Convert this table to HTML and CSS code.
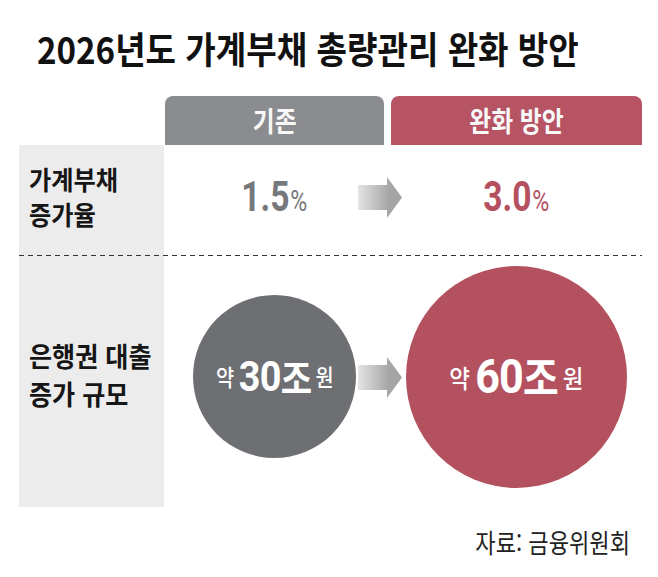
FILE: index.html
```html
<!DOCTYPE html>
<html lang="ko">
<head>
<meta charset="utf-8">
<title>2026년도 가계부채 총량관리 완화 방안</title>
<link rel="stylesheet" href="styles.css">
</head>
<body>
<div class="page">
  <h1 class="title"><span class="squeeze">2026년도 가계부채 총량관리 완화 방안</span></h1>
  <div class="table">
    <div class="side"></div>
    <div class="head head-gray"><span class="squeeze">기존</span></div>
    <div class="head head-red"><span class="squeeze">완화 방안</span></div>

    <div class="label label-1"><span class="squeeze">가계부채<br>증가율</span></div>
    <div class="val val-gray"><span class="squeeze"><span class="digits">1.5</span><span class="pct">%</span></span></div>
    <svg class="arrow arrow-1" viewBox="0 0 44 41" aria-hidden="true">
      <defs>
        <linearGradient id="ag1" x1="0" y1="0" x2="1" y2="0">
          <stop offset="0" stop-color="#e4e4e4"/>
          <stop offset="0.7" stop-color="#a6a6a6"/>
          <stop offset="1" stop-color="#a3a3a3"/>
        </linearGradient>
      </defs>
      <path d="M0 8 H29 V0 L44 20.5 L29 41 V33 H0 Z" fill="url(#ag1)"/>
    </svg>
    <div class="val val-red"><span class="squeeze"><span class="digits">3.0</span><span class="pct">%</span></span></div>

    <div class="divider"></div>

    <div class="label label-2"><span class="squeeze">은행권 대출<br>증가 규모</span></div>
    <div class="circle circle-gray">
      <span class="amount"><span class="yak">약</span><span class="big">30</span><span class="jo">조</span><span class="won">원</span></span>
    </div>
    <svg class="arrow arrow-2" viewBox="0 0 44 41" aria-hidden="true">
      <defs>
        <linearGradient id="ag2" x1="0" y1="0" x2="1" y2="0">
          <stop offset="0" stop-color="#e4e4e4"/>
          <stop offset="0.7" stop-color="#a6a6a6"/>
          <stop offset="1" stop-color="#a3a3a3"/>
        </linearGradient>
      </defs>
      <path d="M0 8 H29 V0 L44 20.5 L29 41 V33 H0 Z" fill="url(#ag2)"/>
    </svg>
    <div class="circle circle-red">
      <span class="amount"><span class="yak">약</span><span class="big">60</span><span class="jo">조</span><span class="won">원</span></span>
    </div>
  </div>
  <div class="source"><span class="squeeze">자료: 금융위원회</span></div>
</div>
</body>
</html>
```

FILE: styles.css
```css
* {
  box-sizing: border-box;
}

html,
body {
  margin: 0;
  padding: 0;
  background: #ffffff;
}

body {
  width: 658px;
  height: 577px;
  overflow: hidden;
  font-family: "Noto Sans CJK KR", "Noto Sans", sans-serif;
  color: #151515;
}

.squeeze {
  display: inline-block;
  white-space: nowrap;
}

/* Title */
.title {
  margin: 30px 0 0 37px;
  font-size: 37px;
  line-height: 36px;
  font-weight: 700;
  white-space: nowrap;
  color: #111111;
}

.title .squeeze {
  transform: scaleX(0.895);
  transform-origin: left center;
}

/* Comparison table */
.table {
  margin: 30px 0 0 19px;
  width: 623px;
  display: grid;
  grid-template-columns: 146px 219px 7px 251px;
  grid-template-rows: 49px 110px 1px 251px;
}

.side {
  grid-column: 1;
  grid-row: 2 / 5;
  width: 145px;
  background: #ececec;
}

.head {
  grid-row: 1;
  display: flex;
  align-items: center;
  justify-content: center;
  border-radius: 8px 8px 0 0;
  color: #f8f8f8;
  font-size: 28px;
  line-height: 1;
  font-weight: 600;
  padding-bottom: 2px;
}

.head .squeeze {
  transform: scaleX(0.85);
}

.head-gray {
  grid-column: 2;
  background: #8b8c8f;
}

.head-red {
  grid-column: 4;
  background: #b65464;
}

/* Row labels */
.label {
  grid-column: 1;
  align-self: center;
  padding-left: 10px;
  font-weight: 700;
  color: #161616;
}

.label .squeeze {
  transform: scaleX(0.93);
  transform-origin: left center;
}

.label-1 {
  grid-row: 2;
  font-size: 26px;
  line-height: 35px;
  margin-bottom: 8px;
}

.label-2 {
  grid-row: 4;
  font-size: 27px;
  line-height: 38px;
  margin-bottom: 14px;
}

/* Percent values */
.val {
  grid-row: 2;
  display: flex;
  align-items: center;
  justify-content: center;
  margin-bottom: 6px;
  font-family: Roboto, "Noto Sans", sans-serif;
  font-weight: 700;
}

.val .squeeze {
  transform: scaleX(0.8);
  font-size: 42px;
  line-height: 1;
}

.val .pct {
  font-weight: 400;
  font-size: 29px;
  margin-left: 1px;
}

.val-gray {
  grid-column: 2;
  color: #77787b;
}

.val-red {
  grid-column: 4;
  color: #b4505f;
}

/* Arrows */
.arrow {
  grid-column: 3;
  justify-self: start;
  align-self: center;
  display: block;
  width: 44px;
  height: 41px;
  margin-left: -26px;
}

.arrow-1 {
  grid-row: 2;
  margin-bottom: 6px;
}

.arrow-2 {
  grid-row: 4;
  margin-bottom: 8px;
}

.divider {
  grid-column: 1 / -1;
  grid-row: 3;
  height: 1px;
  background-image: repeating-linear-gradient(90deg, #333333 0 5px, transparent 5px 9px);
}

/* Circles */
.circle {
  grid-row: 4;
  align-self: center;
  justify-self: center;
  display: flex;
  align-items: center;
  justify-content: center;
  border-radius: 50%;
  color: #ffffff;
  margin-bottom: 10px;
}

.circle-gray {
  grid-column: 2;
  width: 163px;
  height: 163px;
  background: #6e6f72;
}

.circle-red {
  grid-column: 4;
  width: 221px;
  height: 222px;
  background: #b4515f;
}

.amount {
  display: inline-flex;
  align-items: center;
  white-space: nowrap;
  transform: scaleX(0.88);
}

.circle-gray .amount {
  font-size: 43px;
}

.circle-red .amount {
  font-size: 49px;
}

.amount > span {
  line-height: 1;
}

.yak,
.won {
  font-size: 0.52em;
  font-weight: 500;
}

.yak {
  margin-right: 0.24em;
}

.won {
  margin-left: 0.18em;
}

.big {
  font-family: Roboto, "Noto Sans", sans-serif;
  font-weight: 700;
  letter-spacing: -0.02em;
}

.jo {
  font-size: 0.9em;
  font-weight: 700;
}

/* Source */
.source {
  margin: 22px 28px 0 0;
  text-align: right;
  font-size: 26px;
  line-height: 26px;
  font-weight: 400;
  color: #222222;
}

.source .squeeze {
  transform: scaleX(0.85);
  transform-origin: right center;
}
```
